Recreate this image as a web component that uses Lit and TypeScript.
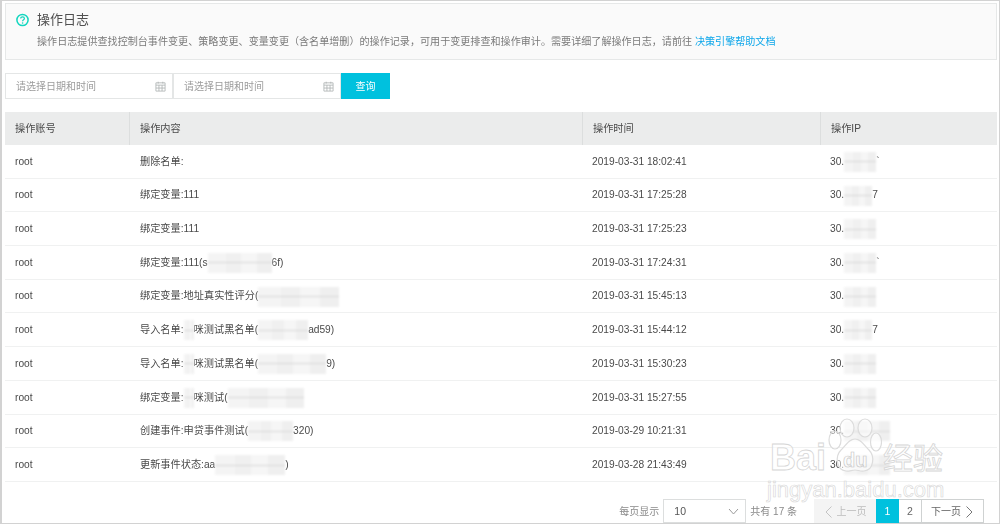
import { LitElement, html, css, svg } from "lit";
import { customElement } from "lit/decorators.js";

type Part = string | { w: number };
interface Row { content: Part[]; time: string; ip: Part[] }

const rows: Row[] = [
  { content: ["删除名单:"], time: "2019-03-31 18:02:41", ip: ["30.", { w: 32 }, "`"] },
  { content: ["绑定变量:111"], time: "2019-03-31 17:25:28", ip: ["30.", { w: 28 }, "7"] },
  { content: ["绑定变量:111"], time: "2019-03-31 17:25:23", ip: ["30.", { w: 32 }] },
  { content: ["绑定变量:111(s", { w: 64 }, "6f)"], time: "2019-03-31 17:24:31", ip: ["30.", { w: 32 }, "`"] },
  { content: ["绑定变量:地址真实性评分(", { w: 81 }], time: "2019-03-31 15:45:13", ip: ["30.", { w: 32 }] },
  { content: ["导入名单:", { w: 10 }, "咪测试黑名单(", { w: 50 }, "ad59)"], time: "2019-03-31 15:44:12", ip: ["30.", { w: 28 }, "7"] },
  { content: ["导入名单:", { w: 10 }, "咪测试黑名单(", { w: 68 }, "9)"], time: "2019-03-31 15:30:23", ip: ["30.", { w: 32 }] },
  { content: ["绑定变量:", { w: 10 }, "咪测试(", { w: 76 }], time: "2019-03-31 15:27:55", ip: ["30.", { w: 32 }] },
  { content: ["创建事件:申贷事件测试(", { w: 45 }, "320)"], time: "2019-03-29 10:21:31", ip: ["30.", { w: 46 }] },
  { content: ["更新事件状态:aa", { w: 70 }, ")"], time: "2019-03-28 21:43:49", ip: ["30.", { w: 46 }] },
];

const calendar = html`<svg class="cal" viewBox="0 0 12 12" aria-hidden="true">
  <path d="M1 2h10v9H1zM1 4.500h10M4.300 4.500V11M7.700 4.500V11M1 7.700h10M3.500 .8v2M8.500 .8v2" fill="none" stroke="#aeb3b3" stroke-width=".9"/>
</svg>`;

const paw = svg`<g fill="#fff" fill-opacity=".5" stroke="#dcdcdc" stroke-width="1.200">
  <ellipse cx="7" cy="22" rx="6" ry="9"/>
  <ellipse cx="19" cy="10" rx="7" ry="9"/>
  <ellipse cx="37" cy="10" rx="7" ry="9"/>
  <ellipse cx="48" cy="24" rx="5.500" ry="9"/>
  <path d="M27 21c6 0 9 6 14 11 6 6 5 20-5 21-4 .5-6-1-9-1s-6 1.500-9 1c-10-1-11-15-5-21 5-5 8-11 14-11z"/>
</g>`;

@customElement("app-root")
export class AppRoot extends LitElement {
  static styles = css`
    :host {
      display: block;
      width: 1000px;
      height: 524px;
      box-sizing: border-box;
      border: solid #d2d2d2;
      border-width: 1px 1px 1px 2px;
      position: relative;
      overflow: hidden;
      background: #fff;
      color: #4a4a4a;
      font: 10.200px/1.2 "Liberation Sans", "Noto Sans CJK SC", sans-serif;
    }
    .page {
      display: flex;
      flex-direction: column;
      padding: 2px 2px 0 3px;
      height: 100%;
      box-sizing: border-box;
      filter: blur(0.45px);
    }
    .notice {
      height: 57px;
      box-sizing: border-box;
      border: 1px solid #e6e8e8;
      background: #fafafa;
      padding: 7px 10px 0;
      display: grid;
      grid-template-columns: 16px 1fr;
      column-gap: 5px;
      row-gap: 6px;
      align-items: center;
      align-content: start;
    }
    .help { width: 14px; height: 14px; }
    .title { font-size: 13px; color: #505050; line-height: 18px; }
    .desc { grid-column: 2; font-size: 10.080px; color: #7a7a7a; line-height: 14px; white-space: nowrap; }
    .desc a { color: #0ca6ea; }
    .filter { display: flex; margin-top: 13px; height: 26px; }
    .date {
      width: 168px;
      box-sizing: border-box;
      border: 1px solid #e4e6e6;
      display: flex;
      align-items: center;
      justify-content: space-between;
      padding: 1px 6px 0 10px;
      color: #9c9c9c;
      font-size: 10px;
    }
    .cal { width: 11px; height: 11px; }
    .search {
      width: 49px;
      box-sizing: border-box;
      padding-top: 1px;
      background: #00c1de;
      color: #fff;
      display: flex;
      align-items: center;
      justify-content: center;
      font-size: 10px;
    }
    .table { margin-top: 13px; }
    .tr {
      display: grid;
      grid-template-columns: 124px 453px 238px 177px;
      height: 33.700px;
      box-sizing: border-box;
      padding-top: 1px;
      border-bottom: 1px solid #f0f1f1;
      align-items: center;
    }
    .tr > div { padding-left: 10px; white-space: nowrap; display: flex; align-items: center; }
    .head { background: #ebecec; height: 33px; border: 0; padding-top: 0; }
    .head > div { height: 100%; box-sizing: border-box; padding-top: 1px; border-left: 1px solid #dcdede; }
    .head > div:first-child { border-left: 0; }
    .tr .content { padding-left: 11px; }
    .tr .time { padding-left: 10px; }
    .tr .ip { padding-left: 10px; }
    .smear {
      display: inline-block;
      height: 20px;
      background:
        linear-gradient(#d6d6d6, #d6d6d6) center / 100% 1px no-repeat,
        linear-gradient(90deg, #f4f4f4 0 28%, #f0f0f0 28% 52%, #f6f6f6 52% 76%, #efefef 76%);
      filter: blur(1.200px);
    }
    .pager {
      display: flex;
      justify-content: flex-end;
      align-items: center;
      margin-top: auto;
      padding-right: 13px;
      height: 24px;
      font-size: 10px;
      color: #8a8a8a;
    }
    .size {
      width: 83px;
      height: 100%;
      box-sizing: border-box;
      border: 1px solid #dcdede;
      margin: 0 4px;
      display: flex;
      align-items: center;
      justify-content: space-between;
      padding: 1px 6px 0 10px;
      color: #555;
      font-size: 10.500px;
    }
    .label { padding-top: 1px; }
    .count { margin-right: 17px; }
    .btn {
      height: 100%;
      box-sizing: border-box;
      padding-top: 1px;
      border: 1px solid #cfd2d2;
      border-left-width: 0;
      display: flex;
      align-items: center;
      justify-content: center;
      gap: 4px;
      color: #666;
    }
    .wide { width: 62px; }
    .num { width: 23px; font-size: 10.500px; }
    .prev { background: #f4f4f4; color: #bdbdbd; border: 0; }
    .on { background: #00c1de; color: #fff; border: 0; }
    .ch { width: 9px; height: 14px; }
    .drop { width: 11px; height: 8px; }
    .mark {
      position: absolute;
      left: 766px;
      top: 416px;
      width: 190px;
      height: 90px;
      pointer-events: none;
      color: rgba(255, 255, 255, 0.55);
      -webkit-text-stroke: 0.800px #d6d6d6;
    }
    .paw { position: absolute; left: 60px; top: 1px; width: 54px; height: 56px; }
    .brand { position: absolute; top: 21px; left: 2px; font-size: 36px; line-height: 40px; white-space: nowrap; font-weight: 700; }
    .brand .du { position: absolute; left: 73px; top: 12px; font-size: 20px; line-height: 20px; -webkit-text-stroke: 0.600px #c4c4c4; }
    .brand .cn { position: absolute; left: 113px; top: 3px; font-size: 30px; line-height: 36px; font-weight: 400; }
    .url {
      position: absolute;
      top: 61px;
      left: -1px;
      font-size: 22px;
      line-height: 24px;
      white-space: nowrap;
      -webkit-text-stroke: 0.600px #d6d6d6;
    }
  `;

  private parts(p: Part[]) {
    return p.map((x) =>
      typeof x === "string"
        ? html`<span>${x}</span>`
        : html`<span class="smear" style="width:${x.w}px"></span>`
    );
  }

  render() {
    return html`
      <div class="page">
        <section class="notice">
          <svg class="help" viewBox="0 0 14 14" aria-hidden="true">
            <circle cx="6.500" cy="7" r="5.600" fill="none" stroke="#12d6bf" stroke-width="1.500"/>
            <path d="M4.700 5.600c0-1.100.8-1.800 1.900-1.800s1.800.7 1.800 1.600c0 1.300-1.800 1.400-1.800 2.800" fill="none" stroke="#12d6bf" stroke-width="1.200"/>
            <circle cx="6.600" cy="10" r=".8" fill="#12d6bf"/>
          </svg>
          <div class="title">操作日志</div>
          <div class="desc">操作日志提供查找控制台事件变更、策略变更、变量变更（含名单增删）的操作记录，可用于变更排查和操作审计。需要详细了解操作日志，请前往 <a>决策引擎帮助文档</a></div>
        </section>
        <div class="filter">
          <div class="date"><span>请选择日期和时间</span>${calendar}</div>
          <div class="date"><span>请选择日期和时间</span>${calendar}</div>
          <div class="search">查询</div>
        </div>
        <div class="table">
          <div class="tr head"><div>操作账号</div><div>操作内容</div><div>操作时间</div><div>操作IP</div></div>
          ${rows.map(
            (r) => html`<div class="tr">
              <div>root</div>
              <div class="content">${this.parts(r.content)}</div>
              <div class="time">${r.time}</div>
              <div class="ip">${this.parts(r.ip)}</div>
            </div>`
          )}
        </div>
        <div class="pager">
          <span class="label">每页显示</span>
          <div class="size"><span>10</span>
            <svg class="drop" viewBox="0 0 11 8" aria-hidden="true"><path d="M1 1l4.500 5L10 1" fill="none" stroke="#9a9a9a"/></svg>
          </div>
          <span class="label count">共有 17 条</span>
          <div class="btn wide prev">
            <svg class="ch" viewBox="0 0 9 14" aria-hidden="true"><path d="M7.500 1.500L2 7l5.500 5.500" fill="none" stroke="#c4c4c4"/></svg>
            <span>上一页</span>
          </div>
          <div class="btn num on">1</div>
          <div class="btn num">2</div>
          <div class="btn wide">
            <span>下一页</span>
            <svg class="ch" viewBox="0 0 9 14" aria-hidden="true"><path d="M1.500 1.500L7 7l-5.500 5.500" fill="none" stroke="#777"/></svg>
          </div>
        </div>
      </div>
      <div class="mark">
        <svg class="paw" viewBox="0 0 54 56" aria-hidden="true">${paw}</svg>
        <div class="brand">Bai<span class="du">du</span><span class="cn">经验</span></div>
        <div class="url">jingyan.baidu.com</div>
      </div>
    `;
  }
}
